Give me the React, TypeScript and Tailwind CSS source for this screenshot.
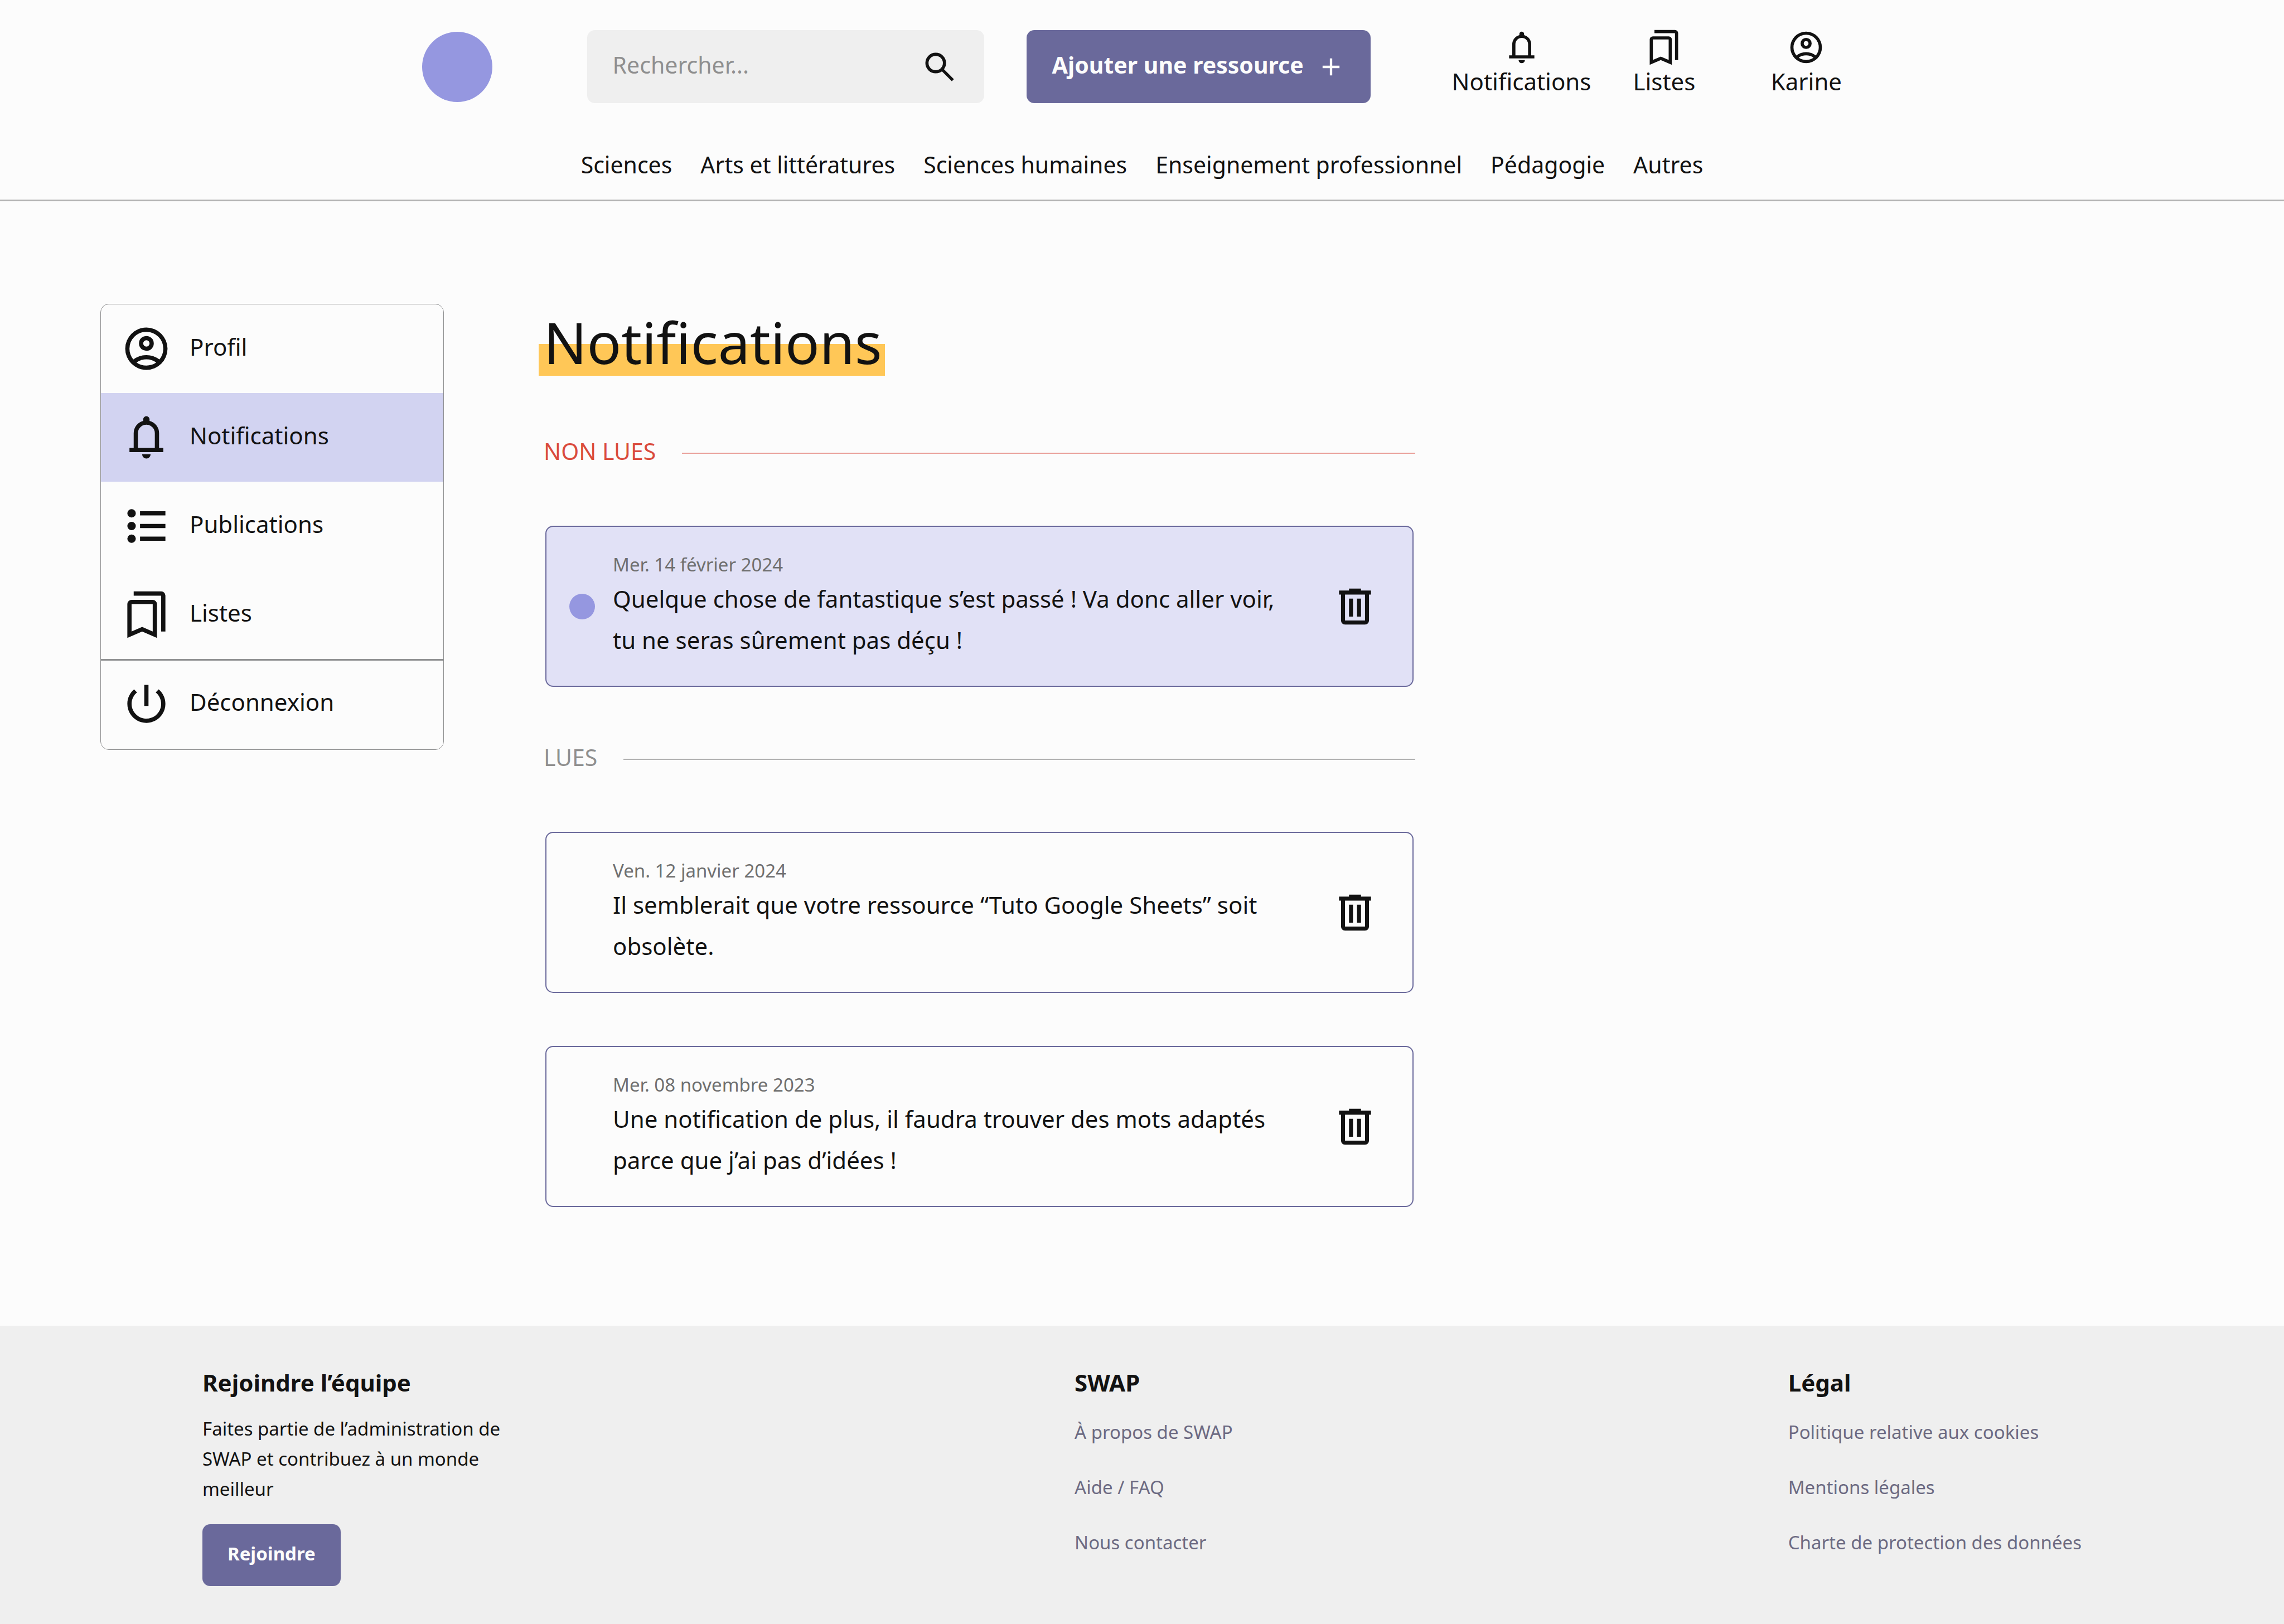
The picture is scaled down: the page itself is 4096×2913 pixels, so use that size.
import type { ReactNode } from "react";

const icons = {
  bell: "M4 19v-2h2v-7q0-2.075 1.25-3.687T10.5 4.2v-.7q0-.625.438-1.062T12 2t1.063.438T13.5 3.5v.7q2 .5 3.25 2.113T18 10v7h2v2zm8 3q-.825 0-1.412-.587T10 20h4q0 .825-.587 1.413T12 22m-4-5h8v-7q0-1.65-1.175-2.825T12 6T9.175 7.175T8 10z",
  bookmarks:
    "M3 23V7q0-.825.588-1.412T5 5h10q.825 0 1.413.588T17 7v16l-7-3zm2-3.05l5-2.15l5 2.15V7H5zM19 20V3H6V1h13q.825 0 1.413.588T21 3v17z",
  account:
    "M5.85 17.1q1.275-.975 2.85-1.537T12 15t3.3.563t2.85 1.537q.875-1.025 1.363-2.325T20 12q0-3.325-2.337-5.663T12 4T6.337 6.338T4 12q0 1.475.488 2.775T5.85 17.1M12 13q-1.475 0-2.488-1.012T8.5 9.5t1.013-2.488T12 6t2.488 1.013T15.5 9.5t-1.012 2.488T12 13m0 9q-2.075 0-3.9-.788t-3.175-2.137T2.788 15.9T2 12t.788-3.9t2.137-3.175T8.1 2.788T12 2t3.9.788t3.175 2.137T21.213 8.1T22 12t-.788 3.9t-2.137 3.175t-3.175 2.138T12 22m0-2q1.325 0 2.5-.387t2.15-1.113q-.975-.725-2.15-1.112T12 17t-2.5.388T7.35 18.5q.975.725 2.15 1.113T12 20m0-9q.65 0 1.075-.425T13.5 9.5t-.425-1.075T12 8t-1.075.425T10.5 9.5t.425 1.075T12 11",
  list: "M9 5h12v2H9zM9 11h12v2H9zM9 17h12v2H9zM5 4a2 2 0 1 1 0 4a2 2 0 0 1 0-4M5 10a2 2 0 1 1 0 4a2 2 0 0 1 0-4M5 16a2 2 0 1 1 0 4a2 2 0 0 1 0-4",
  power:
    "M13 3h-2v10h2zm4.83 2.17l-1.42 1.42C17.99 7.86 19 9.81 19 12c0 3.87-3.13 7-7 7s-7-3.13-7-7c0-2.19 1.01-4.14 2.58-5.42L6.17 5.17C4.23 6.82 3 9.26 3 12c0 4.97 4.03 9 9 9s9-4.03 9-9c0-2.74-1.23-5.18-3.17-6.83",
  trash:
    "M7 21q-.825 0-1.412-.587T5 19V6H4V4h5V3h6v1h5v2h-1v13q0 .825-.587 1.413T17 21zM17 6H7v13h10zM9 17h2V8H9zm4 0h2V8h-2zM7 6v13z",
  plus: "M11 5h2v6h6v2h-6v6h-2v-6H5v-2h6z",
};

function Icon({ name, className }: { name: keyof typeof icons; className: string }) {
  return (
    <svg viewBox="0 0 24 24" fill="currentColor" aria-hidden="true" className={`shrink-0 ${className}`}>
      <path d={icons[name]} />
    </svg>
  );
}

const categories = [
  "Sciences",
  "Arts et littératures",
  "Sciences humaines",
  "Enseignement professionnel",
  "Pédagogie",
  "Autres",
];

const menu: { label: string; icon: keyof typeof icons; active?: boolean }[] = [
  { label: "Profil", icon: "account" },
  { label: "Notifications", icon: "bell", active: true },
  { label: "Publications", icon: "list" },
  { label: "Listes", icon: "bookmarks" },
];

function Shortcut({ icon, label, className = "" }: { icon: keyof typeof icons; label: string; className?: string }) {
  return (
    <a href="#" className={`flex flex-col items-center gap-[3px] pb-[18px] ${className}`}>
      <Icon name={icon} className="size-[68px]" />
      <span className="leading-[48px]">{label}</span>
    </a>
  );
}

function Header() {
  return (
    <header className="border-b-3 border-[#b3b3b3] pt-[51px] pb-[39px]">
      <div className="flex items-center justify-center">
        <a href="#" aria-label="Accueil" className="size-[126px] rounded-full bg-[#9597e0]" />
        <form className="ml-[170px] flex h-[131px] w-[712px] items-center rounded-[14px] bg-[#efefef] px-[46px]">
          <input
            type="search"
            aria-label="Rechercher"
            placeholder="Rechercher..."
            className="min-w-0 flex-1 bg-transparent pb-[8px] text-[41px] leading-[56px] outline-none placeholder:text-[#8f8f8f] placeholder:opacity-100"
          />
          <button type="submit" aria-label="Lancer la recherche">
            <svg viewBox="0 0 24 24" fill="none" stroke="currentColor" className="size-[68px]">
              <circle cx="9.55" cy="9.55" r="5.55" strokeWidth="2" />
              <path d="M13.7 13.7 20.4 20.4" strokeWidth="1.85" />
            </svg>
          </button>
        </form>
        <button
          type="button"
          className="ml-[76px] flex h-[131px] w-[617px] items-center justify-between rounded-[14px] bg-[#6a699b] pr-[45px] pl-[46px] text-[41px] font-bold text-[#fcfcfc]"
        >
          <span className="pb-[8px]">Ajouter une ressource</span>
          <Icon name="plus" className="size-[52px]" />
        </button>
        <Shortcut icon="bell" label="Notifications" className="ml-[146px]" />
        <Shortcut icon="bookmarks" label="Listes" className="ml-[75px]" />
        <Shortcut icon="account" label="Karine" className="ml-[99px] w-[200px]" />
      </div>
      <nav aria-label="Catégories" className="mt-[83px] flex justify-center gap-[51px] text-[41px] leading-[48px]">
        {categories.map((c) => (
          <a key={c} href="#">
            {c}
          </a>
        ))}
      </nav>
    </header>
  );
}

function Sidebar() {
  return (
    <nav
      aria-label="Mon compte"
      className="w-[616px] shrink-0 overflow-hidden rounded-[15px] border border-[#8f9091]"
    >
      {menu.map((m) => (
        <a
          key={m.label}
          href="#"
          aria-current={m.active ? "page" : undefined}
          className={`flex h-[159px] items-center gap-[32px] pl-[36px] ${m.active ? "bg-[#d2d3f1]" : ""}`}
        >
          <Icon name={m.icon} className="size-[91px]" />
          <span className="pb-[8px]">{m.label}</span>
        </a>
      ))}
      <button
        type="button"
        className="flex h-[162px] w-full items-center gap-[32px] border-t-3 border-[#8f9091] pb-[4px] pl-[36px]"
      >
        <Icon name="power" className="size-[91px]" />
        <span className="pb-[8px]">Déconnexion</span>
      </button>
    </nav>
  );
}

function SectionTitle({ children, tone, line }: { children: ReactNode; tone: string; line: string }) {
  return (
    <div className="flex h-[60px] items-center gap-[47px]">
      <h2 className={`pb-[8px] text-[41px] ${tone}`}>{children}</h2>
      <span className={`h-[2px] flex-1 ${line}`} />
    </div>
  );
}

function Notification({ date, text, unread = false }: { date: string; text: string; unread?: boolean }) {
  return (
    <article
      className={`mx-[3px] flex items-center rounded-[14px] border-2 border-[#6a699b] py-[42px] pr-[60px] pl-[41px] ${
        unread ? "bg-[#e1e1f6]" : ""
      }`}
    >
      <span
        role={unread ? "img" : undefined}
        aria-label={unread ? "Non lue" : undefined}
        className={`mr-[32px] size-[46px] shrink-0 rounded-full ${unread ? "bg-[#9597e0]" : ""}`}
      />
      <div className="flex-1 pt-[2px] pb-[3px]">
        <time className="block text-[33px] leading-[48px] text-[#6f6f6f]">{date}</time>
        <p className="max-w-[1200px] leading-[74px]">{text}</p>
      </div>
      <button type="button" aria-label="Supprimer la notification">
        <Icon name="trash" className="size-[86px]" />
      </button>
    </article>
  );
}

function FooterLinks({ title, links }: { title: string; links: string[] }) {
  return (
    <section>
      <h2 className="leading-[60px] font-bold">{title}</h2>
      <ul className="mt-[32px] flex flex-col gap-[45px] text-[33px] leading-[54px] text-[#6c6a82]">
        {links.map((l) => (
          <li key={l}>
            <a href="#">{l}</a>
          </li>
        ))}
      </ul>
    </section>
  );
}

function Footer() {
  return (
    <footer className="flex items-start justify-between bg-[#efefef] px-[363px] pt-[72px] pb-[68px]">
      <section className="w-[568px]">
        <h2 className="leading-[60px] font-bold">Rejoindre l’équipe</h2>
        <p className="mt-[26px] text-[33px] leading-[54px]">
          Faites partie de l’administration de SWAP et contribuez à un monde meilleur
        </p>
        <button
          type="button"
          className="mt-[36px] h-[111px] rounded-[14px] bg-[#6a699b] px-[45px] pb-[5px] text-[33px] font-bold text-[#fcfcfc]"
        >
          Rejoindre
        </button>
      </section>
      <FooterLinks title="SWAP" links={["À propos de SWAP", "Aide / FAQ", "Nous contacter"]} />
      <FooterLinks
        title="Légal"
        links={["Politique relative aux cookies", "Mentions légales", "Charte de protection des données"]}
      />
    </footer>
  );
}

export default function App() {
  return (
    <div className="flex min-h-screen flex-col bg-[#fcfcfc] font-['Noto_Sans','Open_Sans',sans-serif] text-[42px] leading-[56px] text-[#121212]">
      <Header />
      <main className="flex flex-1 items-start gap-[179px] px-[180px] pt-[184px] pb-[213px]">
        <Sidebar />
        <div className="max-w-[1563px] flex-1 pt-[9px]">
          <h1 className="-ml-[9px] w-fit bg-[linear-gradient(transparent_63px,#ffc757_63px)] pr-[5px] pl-[9px] text-[102px] leading-[120px]">
            Notifications
          </h1>
          <section className="mt-[109px] flex flex-col gap-[100px]">
            <SectionTitle tone="text-[#da4b3c]" line="bg-[#e9a09a]">
              NON LUES
            </SectionTitle>
            <Notification
              unread
              date="Mer. 14 février 2024"
              text="Quelque chose de fantastique s’est passé ! Va donc aller voir, tu ne seras sûrement pas déçu !"
            />
          </section>
          <section className="mt-[100px] flex flex-col gap-[100px]">
            <SectionTitle tone="text-[#8f8f8f]" line="bg-[#b0b0b0]">
              LUES
            </SectionTitle>
            <div className="flex flex-col gap-[95px]">
              <Notification
                date="Ven. 12 janvier 2024"
                text="Il semblerait que votre ressource “Tuto Google Sheets” soit obsolète."
              />
              <Notification
                date="Mer. 08 novembre 2023"
                text="Une notification de plus, il faudra trouver des mots adaptés parce que j’ai pas d’idées !"
              />
            </div>
          </section>
        </div>
      </main>
      <Footer />
    </div>
  );
}
